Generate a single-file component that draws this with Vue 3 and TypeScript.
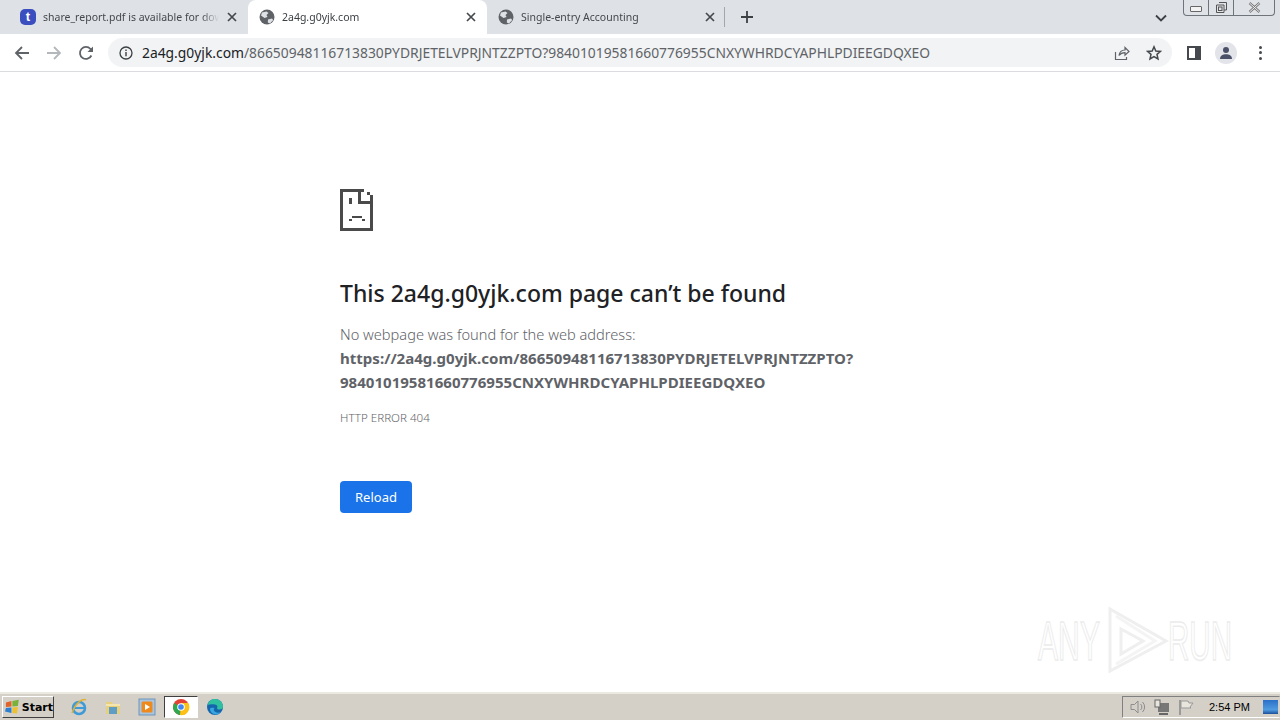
<script setup lang="ts">
const tabs = [
  { title: 'share_report.pdf is available for download', icon: 't', active: false },
  { title: '2a4g.g0yjk.com', icon: 'globe', active: true },
  { title: 'Single-entry Accounting', icon: 'globe', active: false }
]
</script>

<template>
  <div class="screen">
    <div class="tabstrip">
      <div
        v-for="tab in tabs"
        :key="tab.title"
        class="tab"
        :class="{ active: tab.active }"
      >
        <svg v-if="tab.icon === 'globe'" class="favicon" viewBox="0 0 16 16">
          <circle cx="8" cy="8" r="7.5" fill="#5f6368" />
          <path d="M3 3.5 7.500 2.500 9.500 4 7.500 6 8.500 8 5.500 9 2 6.500ZM9 10.500l4-1 1.200 1.500-3.200 3.600-2.200-1Z" fill="#dee1e6" />
        </svg>
        <span v-else class="favicon t-icon">t</span>
        <span class="tab-title">{{ tab.title }}</span>
        <svg class="tab-close" viewBox="0 0 10 10">
          <path d="M1 1 9 9M9 1 1 9" stroke="#45484c" stroke-width="1.7" />
        </svg>
      </div>
      <span class="tab-sep"></span>
      <svg class="new-tab" viewBox="0 0 14 14">
        <path d="M7 1v12M1 7h12" stroke="#3c4043" stroke-width="1.8" />
      </svg>
      <svg class="tab-search" viewBox="0 0 12 8">
        <path d="M1 1.500 6 6.500 11 1.500" fill="none" stroke="#3c4043" stroke-width="1.8" />
      </svg>
      <div class="win-controls">
        <div class="win-btn min"><span class="min-glyph"></span></div>
        <div class="win-btn max">
          <svg viewBox="0 0 13 13" width="13" height="13">
            <path d="M4 1.500h7.500V9H9M1.500 4H9v7.500H1.500Z" fill="none" stroke="#555" />
            <rect x="3.500" y="6" width="3.500" height="3.500" fill="none" stroke="#555" />
          </svg>
        </div>
        <div class="win-btn close">
          <svg viewBox="0 0 13 11" width="13" height="11">
            <path d="M1.500 1 11.500 10M11.500 1 1.500 10" stroke="#777" stroke-width="2.4" />
            <path d="M1.500 1 11.500 10M11.500 1 1.500 10" stroke="#eee" stroke-width="1" />
          </svg>
        </div>
      </div>
    </div>

    <div class="toolbar">
      <svg class="nav" viewBox="0 0 16 16">
        <path d="M15 8H2M8 2 2 8l6 6" fill="none" stroke="#5f6368" stroke-width="1.8" />
      </svg>
      <svg class="nav fwd" viewBox="0 0 16 16">
        <path d="M1 8h13M8 2l6 6-6 6" fill="none" stroke="#b4b7bb" stroke-width="1.8" />
      </svg>
      <svg class="nav reload-ic" viewBox="0 0 16 16">
        <path d="M13.400 10.500A6 6 0 1 1 12.500 4L14.400 5.800" fill="none" stroke="#5f6368" stroke-width="1.8" />
        <path d="M15 1.500V7H9.500Z" fill="#5f6368" />
      </svg>
      <div class="omnibox">
        <svg class="info" viewBox="0 0 14 14">
          <circle cx="7" cy="7" r="6" fill="none" stroke="#3c4043" stroke-width="1.3" />
          <path d="M7 6v4.300M7 3.400v1.500" stroke="#3c4043" stroke-width="1.4" />
        </svg>
        <div class="url">
          <span class="host">2a4g.g0yjk.com</span><span class="path">/86650948116713830PYDRJETELVPRJNTZZPTO?98401019581660776955CNXYWHRDCYAPHLPDIEEGDQXEO</span>
        </div>
        <svg class="share" viewBox="0 0 16 16">
          <path d="M1.500 7v7.500h11V12M5 10.500C5.500 7 8 5 11 5V2.500l4 4-4 3.700V7.600c-2.500 0-4.700 1-6 2.900Z" fill="none" stroke="#5f6368" stroke-width="1.2" />
        </svg>
        <svg class="star" viewBox="0 0 16 16">
          <path d="M8 1.800 9.800 6 14.500 6.400 11 9.400 12 14 8 11.600 4 14 5 9.400 1.500 6.400 6.200 6Z" fill="none" stroke="#45484c" stroke-width="1.5" />
        </svg>
      </div>
      <div class="side-panel"><span></span></div>
      <div class="avatar">
        <svg viewBox="0 0 14 14" width="14" height="14">
          <circle cx="7" cy="4" r="3" fill="#4a5068" />
          <path d="M1 13c0-3.500 3-4.800 6-4.800s6 1.300 6 4.800Z" fill="#4a5068" />
        </svg>
      </div>
      <div class="kebab"><i></i><i></i><i></i></div>
    </div>

    <main class="page">
      <div class="content">
        <svg class="sad-file" viewBox="0 0 33 42" shape-rendering="crispEdges">
          <g fill="#4a4a4a">
            <rect x="0" y="0" width="24" height="3" />
            <rect x="0" y="0" width="3" height="42" />
            <rect x="0" y="39" width="33" height="3" />
            <rect x="30" y="12" width="3" height="30" />
            <rect x="18" y="0" width="3" height="15" />
            <rect x="18" y="12" width="15" height="3" />
            <rect x="27" y="3" width="3" height="3" />
            <rect x="30" y="6" width="3" height="6" />
            <rect x="9" y="9" width="3" height="6" />
            <rect x="12" y="27" width="10" height="2" />
            <rect x="9" y="30" width="3" height="2" />
            <rect x="22" y="30" width="3" height="2" />
          </g>
        </svg>
        <h1 class="heading">This 2a4g.g0yjk.com page can’t be found</h1>
        <p class="lead">No webpage was found for the web address:</p>
        <p class="bad-url">https://2a4g.g0yjk.com/86650948116713830PYDRJETELVPRJNTZZPTO?<br />98401019581660776955CNXYWHRDCYAPHLPDIEEGDQXEO</p>
        <div class="err-code">HTTP ERROR 404</div>
        <button class="reload-btn">Reload</button>
      </div>
      <svg class="watermark" viewBox="0 0 210 64" width="210" height="64">
        <g class="wm-text">
          <text x="1" y="52" textLength="62" lengthAdjust="spacingAndGlyphs">ANY</text>
          <text x="131" y="52" textLength="64" lengthAdjust="spacingAndGlyphs">RUN</text>
        </g>
        <path d="M73 1 129 33 73 63ZM84 21 106 33 84 46Z" fill="none" stroke="#efefef" stroke-width="3" />
        <path d="M79 8 118 33 79 56" fill="none" stroke="#f4f4f4" stroke-width="3" />
      </svg>
    </main>

    <footer class="taskbar">
      <button class="start">
        <svg viewBox="0 0 16 16" width="17" height="16">
          <path d="M1 3 7 1.500V7.500L1 8Z" fill="#e2632a" />
          <path d="M8 1.500 15 0 14 7 8 7.500Z" fill="#79b13a" />
          <path d="M1 9 7 8.500V14.500L0 13Z" fill="#2f7fd0" />
          <path d="M8 8.500 14 8 13 15 8 14.500Z" fill="#f0c030" />
        </svg>
        <span>Start</span>
      </button>
      <div class="quick">
        <div class="q-item">
          <svg viewBox="0 0 18 18" width="18" height="18">
            <circle cx="9" cy="10" r="6" fill="none" stroke="#3f9ad8" stroke-width="2.6" />
            <path d="M3 10h12" stroke="#3f9ad8" stroke-width="2" />
            <path d="M2 15C6 4 13 0 16 2" fill="none" stroke="#e0b030" stroke-width="1.4" />
          </svg>
        </div>
        <div class="q-item">
          <svg viewBox="0 0 18 18" width="18" height="18">
            <path d="M2 4h6l1 2h7v10H2Z" fill="#e8cf7c" />
            <path d="M5 9h8v7H5Z" fill="#5f9dc4" />
            <path d="M2 6h14v2H2Z" fill="#f4e6ae" />
          </svg>
        </div>
        <div class="q-item">
          <svg viewBox="0 0 18 18" width="18" height="18">
            <rect x="1" y="1" width="16" height="16" fill="#a9c4de" stroke="#6f94b8" />
            <rect x="3.500" y="3.500" width="11" height="11" rx="1.500" fill="#ee8a1d" />
            <path d="M7 6 12 9 7 12Z" fill="#fff" />
          </svg>
        </div>
        <div class="q-item chrome-box">
          <svg viewBox="0 0 18 18" width="18" height="18">
            <circle cx="9" cy="9" r="8" fill="#e34133" />
            <path d="M9 9 2.100 5 1 9c0 4 3 7.500 7 8Z" fill="#2fa84f" />
            <path d="M9 5h7.200A8 8 0 0 1 8 17Z" fill="#fbc116" />
            <circle cx="9" cy="9" r="3.800" fill="#fff" />
            <circle cx="9" cy="9" r="2.800" fill="#4286f4" />
          </svg>
        </div>
        <div class="q-item">
          <svg viewBox="0 0 18 18" width="18" height="18">
            <circle cx="9" cy="9" r="8" fill="#1565ad" />
            <path d="M1.500 7C3 2.500 6 1 9 1c4.500 0 8 3.500 8 7.500 0 2-1.500 3-3.500 3-1.500 0-2.500-.5-2.500-1.500 1-1 .5-3-2-3.500C6.500 6 3.500 6 1.500 7Z" fill="#2fc0a0" />
            <path d="M4 11c0 3 3 5.500 6 5.500 2 0 4-1 5-2.500-3 1.500-6 .5-7-1.500-.5-1 0-2 .5-2.500C6 9.500 4 10 4 11Z" fill="#3aa6e0" />
          </svg>
        </div>
      </div>
      <div class="tray">
        <svg viewBox="0 0 16 16" width="16" height="16">
          <path d="M1 5.500h3.500L8 2v12L4.500 10.500H1Z" fill="none" stroke="#8c8c8c" />
          <path d="M10.500 5a4 4 0 0 1 0 6M12.500 3a7 7 0 0 1 0 10" fill="none" stroke="#8c8c8c" />
        </svg>
        <svg viewBox="0 0 16 16" width="16" height="16">
          <rect x="4" y="4" width="11" height="9" fill="#777" />
          <rect x="1" y="1" width="5" height="7" fill="#e8e5dd" stroke="#666" />
          <path d="M5 15h9" stroke="#666" stroke-width="2" />
        </svg>
        <svg viewBox="0 0 16 16" width="16" height="16">
          <path d="M2 1v15" stroke="#888" stroke-width="1.5" />
          <path d="M3 2h7l1 2h4l-3 4 1 1H3Z" fill="#e8e5dd" stroke="#999" />
        </svg>
        <span class="clock">2:54 PM</span>
        <span class="show-desktop"></span>
      </div>
    </footer>
  </div>
</template>

<style>
html,
body {
  margin: 0;
  overflow: hidden;
}
</style>

<style scoped>
.screen {
  width: 1280px;
  height: 720px;
  display: flex;
  flex-direction: column;
  background: #fff;
  font-family: "Noto Sans", "Open Sans", sans-serif;
  color: #202124;
}

/* tab strip */
.tabstrip {
  height: 34px;
  flex: none;
  display: flex;
  align-items: center;
  padding-left: 9px;
  background: #dee1e6;
  position: relative;
}

.tab {
  width: 239px;
  height: 34px;
  box-sizing: border-box;
  display: flex;
  align-items: center;
  padding: 0 11px 0 11px;
  font-size: 10.5px;
  color: #45484c;
  border-radius: 8px 8px 0 0;
}

.tab.active {
  background: #fff;
  color: #3c4043;
}

.favicon {
  width: 16px;
  height: 16px;
  flex: none;
  margin-right: 7px;
}

.t-icon {
  display: block;
  border-radius: 5px;
  background: #3b4ec0;
  color: #fff;
  font: bold 13px/16px "Liberation Sans", sans-serif;
  text-align: center;
}

.tab-title {
  flex: 1;
  overflow: hidden;
  white-space: nowrap;
  margin-right: 8px;
  -webkit-mask-image: linear-gradient(to right, #000 90%, transparent);
  mask-image: linear-gradient(to right, #000 90%, transparent);
}

.tab-close {
  width: 10px;
  height: 10px;
  flex: none;
}

.tab-sep {
  width: 1px;
  height: 20px;
  background: #a3a6ab;
  margin-left: -2px;
}

.new-tab {
  width: 14px;
  height: 14px;
  margin-left: 15px;
}

.tab-search {
  width: 12px;
  height: 8px;
  margin-left: auto;
  margin-right: 113px;
  margin-top: 2px;
}

.win-controls {
  position: absolute;
  top: 0;
  left: 1183px;
  width: 92px;
  height: 16px;
  box-sizing: border-box;
  display: flex;
  border: 1px solid #6f747b;
  border-top: none;
  border-radius: 0 0 4px 4px;
  background: #dfe2e7;
}

.win-btn {
  box-sizing: border-box;
  display: flex;
  align-items: center;
  justify-content: center;
  border-right: 1px solid #6f747b;
}

.win-btn.min,
.win-btn.max {
  width: 25px;
}

.win-btn.close {
  flex: 1;
  border-right: none;
}

.min-glyph {
  width: 10px;
  height: 4px;
  margin-top: 3px;
  border: 1px solid #666;
  border-radius: 1px;
  background: #f2f2f2;
}

/* toolbar */
.toolbar {
  height: 38px;
  flex: none;
  box-sizing: border-box;
  display: flex;
  align-items: center;
  padding-left: 14px;
  background: #fff;
  border-bottom: 1px solid #dadce0;
}

.nav {
  width: 16px;
  height: 16px;
  flex: none;
  margin-right: 16px;
}

.reload-ic {
  margin-right: 14px;
}

.omnibox {
  width: 1064px;
  height: 29px;
  flex: none;
  box-sizing: border-box;
  display: flex;
  align-items: center;
  padding: 0 10px 0 11px;
  border-radius: 15px;
  background: #f1f3f4;
}

.info {
  width: 14px;
  height: 14px;
  flex: none;
  margin-right: 9px;
}

.url {
  flex: 1;
  font-size: 13.85px;
  white-space: nowrap;
  overflow: hidden;
}

.host {
  color: #202124;
}

.path {
  color: #5f6368;
}

.share,
.star {
  width: 16px;
  height: 16px;
  flex: none;
}

.star {
  margin-left: 16px;
}

.side-panel {
  width: 14px;
  height: 14px;
  flex: none;
  box-sizing: border-box;
  margin-left: 15px;
  background: #45484c;
  padding: 2px 6px 2px 2px;
}

.side-panel span {
  display: block;
  width: 100%;
  height: 100%;
  background: #fff;
}

.avatar {
  width: 22px;
  height: 22px;
  flex: none;
  display: flex;
  align-items: center;
  justify-content: center;
  margin-left: 14px;
  border-radius: 50%;
  background: #e2e4ea;
}

.kebab {
  display: flex;
  flex-direction: column;
  gap: 2.5px;
  margin-left: 22px;
}

.kebab i {
  display: block;
  width: 3px;
  height: 3px;
  border-radius: 50%;
  background: #45484c;
}

/* error page */
.page {
  flex: 1;
  position: relative;
  background: #fff;
}

.content {
  display: flex;
  flex-direction: column;
  align-items: flex-start;
  padding: 117px 0 0 340px;
}

.sad-file {
  width: 33px;
  height: 42px;
}

.heading {
  margin: 44px 0 0;
  font-size: 23px;
  line-height: 36px;
  font-weight: 500;
  color: #202124;
}

.lead {
  margin: 11px 0 0;
  font-size: 14.6px;
  line-height: 24px;
  font-weight: 300;
  color: #5f6368;
}

.bad-url {
  margin: 0;
  font-size: 15.05px;
  line-height: 24px;
  font-weight: 700;
  color: #5f6368;
}

.err-code {
  margin-top: 15px;
  font-size: 11.6px;
  line-height: 18px;
  font-weight: 300;
  color: #5f6368;
}

.reload-btn {
  margin-top: 54px;
  width: 72px;
  height: 32px;
  border: none;
  border-radius: 4px;
  background: #1a73e8;
  color: #fff;
  font-family: inherit;
  font-size: 13px;
}

.watermark {
  position: absolute;
  left: 1037px;
  top: 536px;
  overflow: visible;
}

.wm-text {
  font-family: "Liberation Sans", sans-serif;
  font-size: 56px;
  fill: none;
  stroke: #ececec;
  stroke-width: 1.5px;
}

/* taskbar */
.taskbar {
  height: 28px;
  flex: none;
  box-sizing: border-box;
  display: flex;
  align-items: center;
  background: #d4d0c8;
  border-top: 2px solid #ece9e0;
}

.start {
  width: 52px;
  height: 22px;
  box-sizing: border-box;
  display: flex;
  align-items: center;
  gap: 2px;
  margin-left: 2px;
  padding: 0 0 0 2px;
  border: 1px solid;
  border-color: #fff #404040 #404040 #fff;
  background: #d4d0c8;
  font: bold 11px "DejaVu Sans", sans-serif;
  color: #000;
}

.quick {
  display: flex;
  align-items: center;
  margin-left: 8px;
}

.q-item {
  width: 34px;
  height: 22px;
  box-sizing: border-box;
  display: flex;
  align-items: center;
  justify-content: center;
}

.chrome-box {
  background: #fff;
  border: 1px solid;
  border-color: #404040 #fff #fff #404040;
}

.tray {
  height: 22px;
  box-sizing: border-box;
  display: flex;
  align-items: center;
  gap: 8px;
  margin-left: auto;
  padding-left: 7px;
  border: 1px solid;
  border-color: #808080 transparent #fff #808080;
  width: 158px;
}

.clock {
  margin-left: 7px;
  font: 11px "Liberation Sans", sans-serif;
  color: #000;
  white-space: nowrap;
}

.show-desktop {
  width: 15px;
  height: 14px;
  margin-left: 5px;
  background: linear-gradient(#2a70c8, #4f9be0 70%, #1c4f9a);
}
</style>
